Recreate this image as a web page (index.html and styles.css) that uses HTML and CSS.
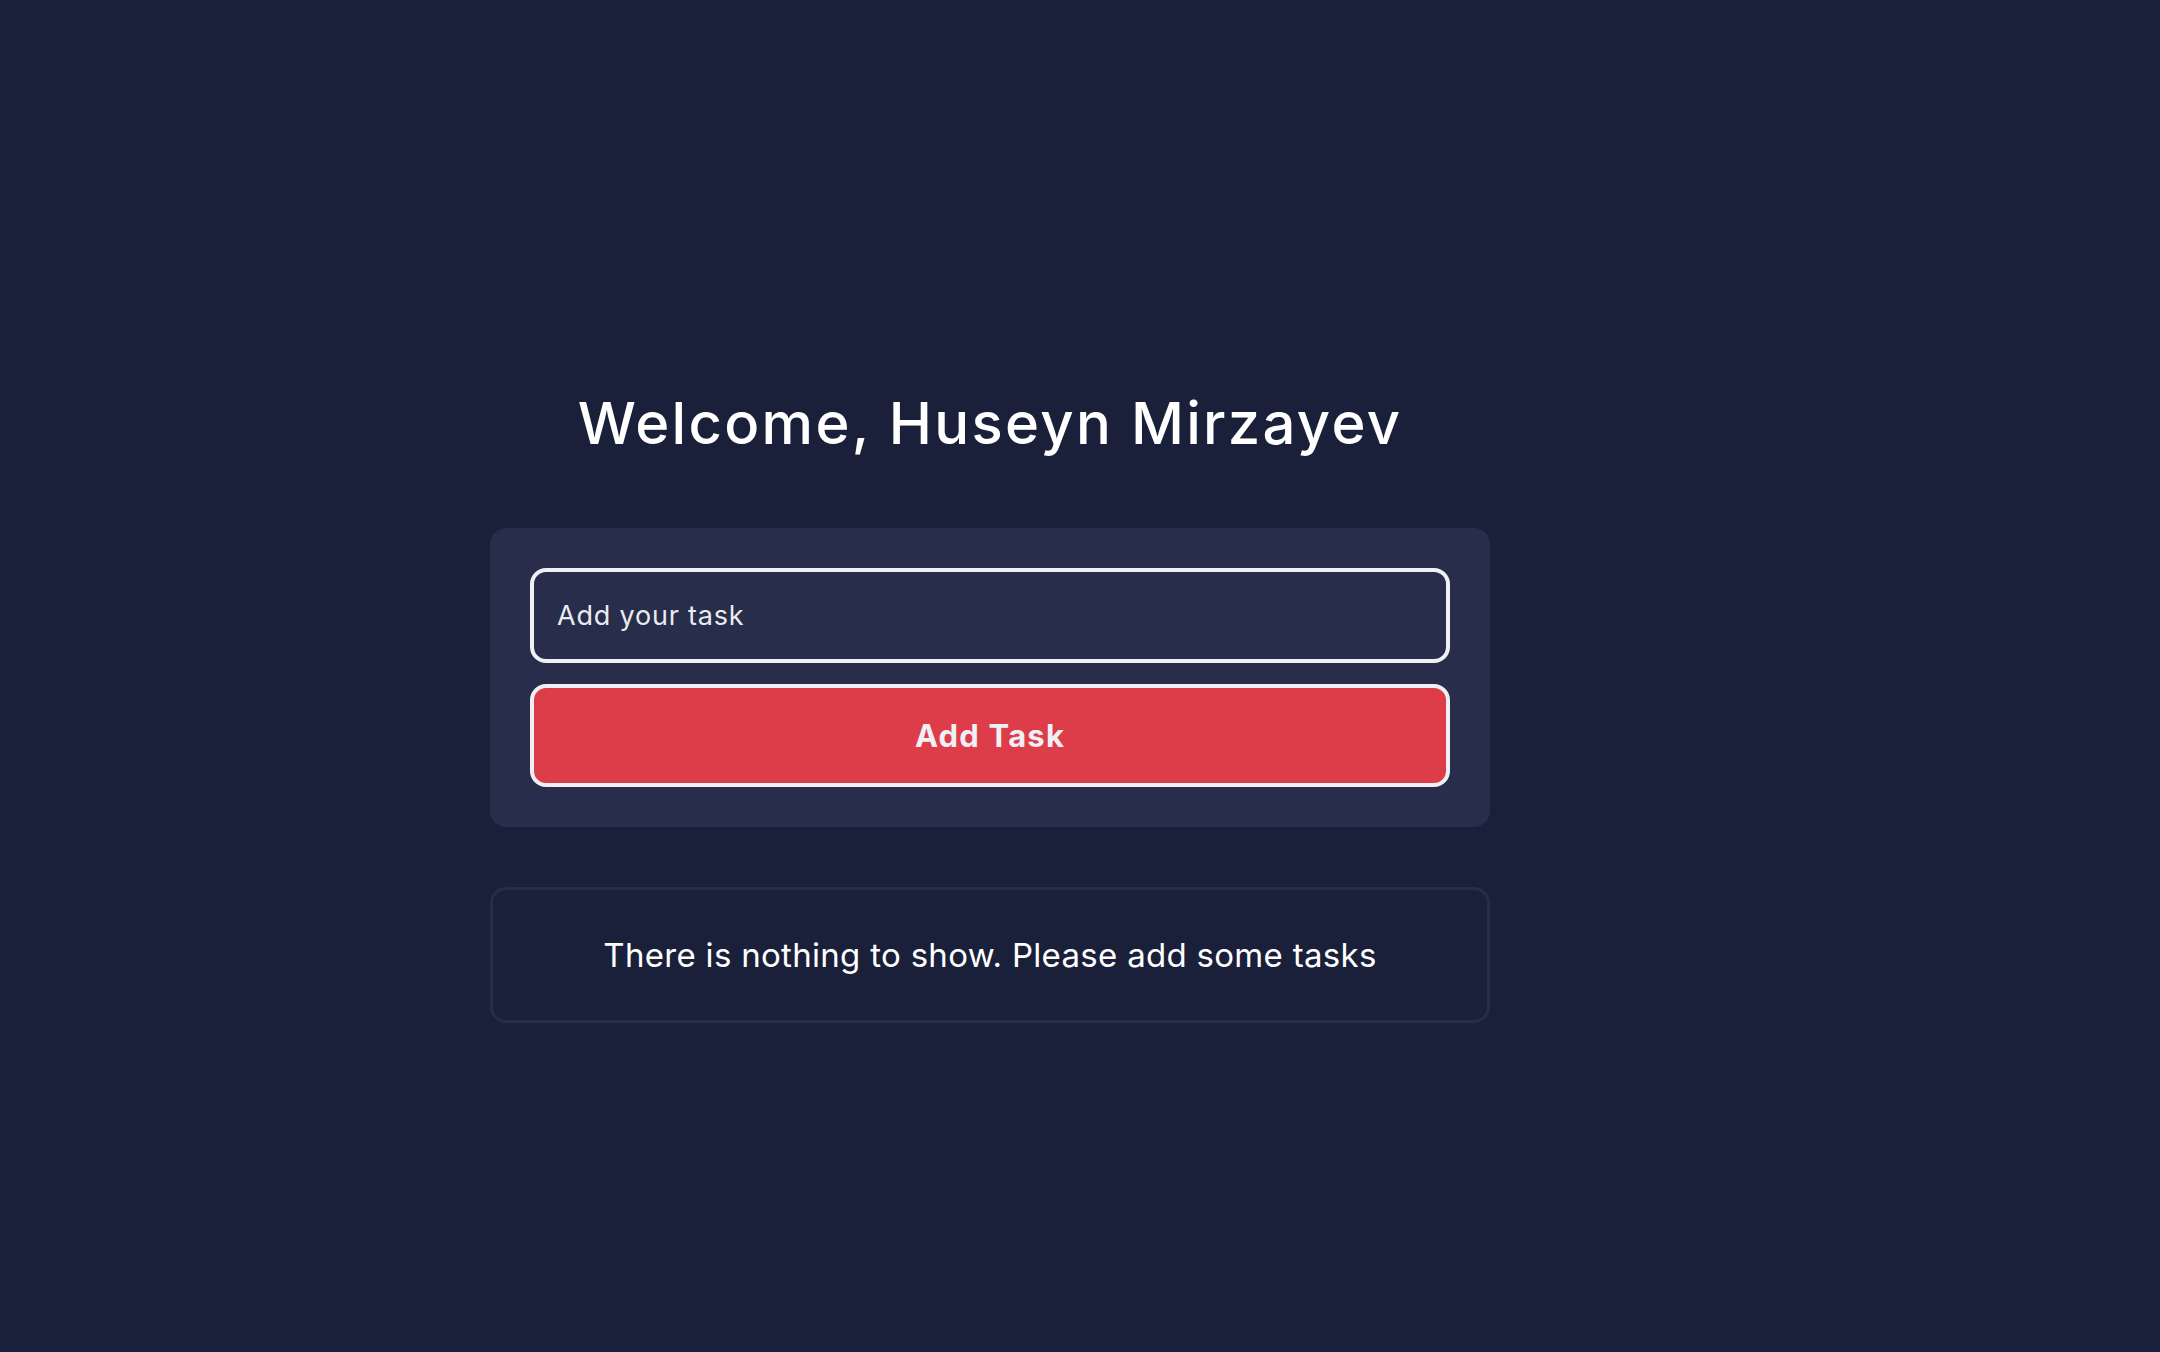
FILE: index.html
```html
<!DOCTYPE html>
<html lang="en">
<head>
<meta charset="utf-8">
<title>Todo</title>
<link rel="stylesheet" href="styles.css">
</head>
<body>
<main class="page">
  <h1 class="title">Welcome, Huseyn Mirzayev</h1>
  <form class="card">
    <input class="task-input" type="text" placeholder="Add your task">
    <button class="add-btn" type="button">Add Task</button>
  </form>
  <div class="empty">
    <p class="empty-text">There is nothing to show. Please add some tasks</p>
  </div>
</main>
</body>
</html>
```

FILE: styles.css
```css
html, body {
  margin: 0;
  padding: 0;
  background: #1a1f3a;
  min-height: 100vh;
}
body {
  font-family: Inter, "Noto Sans", sans-serif;
  color: #ffffff;
}
.page {
  width: 1000px;
  margin-left: 490px;
  padding-top: 393px;
  display: flex;
  flex-direction: column;
}
.title {
  margin: 0;
  font-size: 58px;
  line-height: 60px;
  font-weight: 500;
  letter-spacing: 2.3px;
  text-align: center;
  color: #ffffff;
}
.card {
  margin: 75px 0 0;
  background: #272d4a;
  border-radius: 16px;
  padding: 40px;
  display: flex;
  flex-direction: column;
  gap: 21px;
}
.task-input {
  box-sizing: border-box;
  height: 95px;
  width: 100%;
  border: 4px solid #eef0f4;
  border-radius: 16px;
  background: #272d4a;
  padding: 0 20px 0 23px;
  font-family: Inter, "Noto Sans", sans-serif;
  font-size: 27px;
  letter-spacing: 0.8px;
  color: #eef0f4;
  outline: none;
}
.task-input::placeholder {
  color: #e9ebf0;
  opacity: 1;
}
.add-btn {
  box-sizing: border-box;
  height: 103px;
  width: 100%;
  border: 4px solid #eef0f4;
  border-radius: 16px;
  background: #dc3d48;
  color: #eef0f4;
  font-family: Inter, "Noto Sans", sans-serif;
  font-size: 31px;
  font-weight: 700;
  letter-spacing: 1.2px;
  cursor: pointer;
}
.empty {
  box-sizing: border-box;
  margin-top: 60px;
  height: 136px;
  border: 3px solid #262d49;
  border-radius: 16px;
  display: flex;
  align-items: center;
  justify-content: center;
}
.empty-text {
  margin: 0;
  font-size: 33px;
  font-weight: 400;
  letter-spacing: 0.3px;
  color: #ffffff;
}
```
